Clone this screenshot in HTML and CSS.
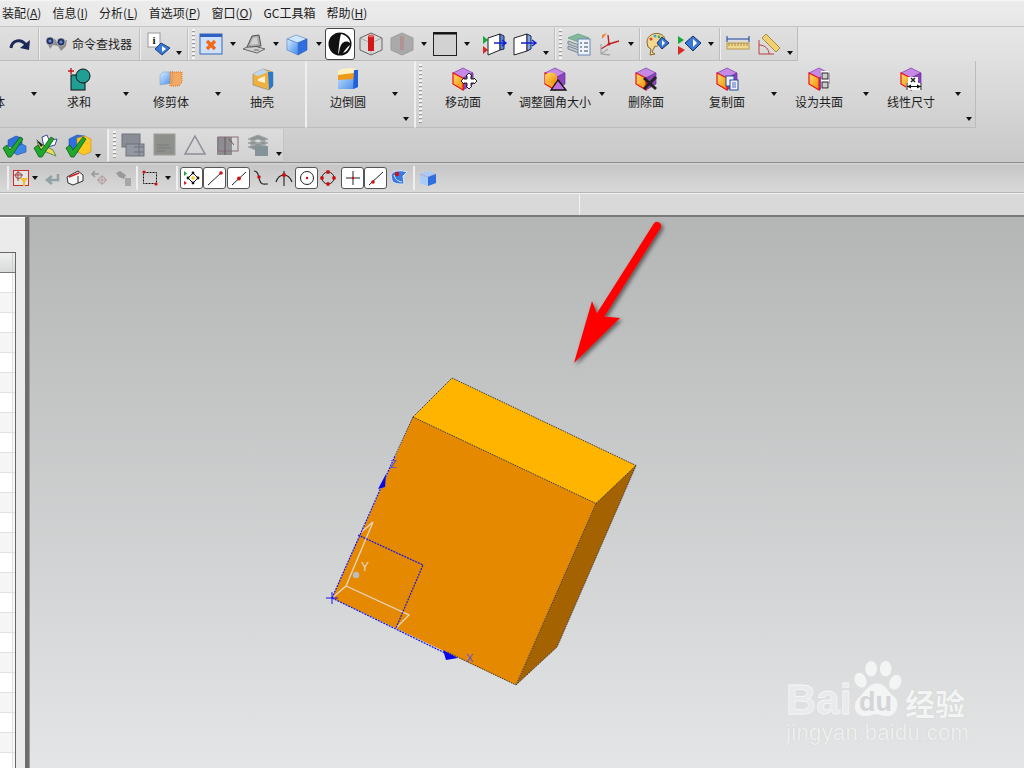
FILE: index.html
```html
<!DOCTYPE html>
<html lang="zh-CN">
<head>
<meta charset="utf-8">
<title>NX</title>
<link rel="stylesheet" href="styles.css">
</head>
<body>
<svg class="defs" aria-hidden="true">
  <defs>
    <linearGradient id="bl" x1="0" y1="0" x2="1" y2="1"><stop offset="0" stop-color="#d8ecff"/><stop offset="1" stop-color="#3d86ea"/></linearGradient>
    <linearGradient id="yl" x1="0" y1="0" x2="1" y2="1"><stop offset="0" stop-color="#ffe070"/><stop offset="1" stop-color="#f08a00"/></linearGradient>
    <symbol id="face" viewBox="0 0 24 24">
      <path d="M12 1 22 6 12 11 2 6Z" fill="#c48ae6" stroke="#7a3aa8" stroke-width=".7"/>
      <path d="M22 6V17L12 23V11Z" fill="#8c45bd" stroke="#6a2c98" stroke-width=".7"/>
      <path d="M2 6 12 11V23L2 17Z" fill="url(#yl)" stroke="#f01010" stroke-width="1.2"/>
    </symbol>
    <symbol id="cube" viewBox="0 0 24 24">
      <path d="M2 7 11 3 22 7 12 11Z" fill="#cfe6ff" stroke="#4a7fc0" stroke-width=".6"/>
      <path d="M22 7V18L13 23V11Z" fill="#2f6fe0" stroke="#2a58b0" stroke-width=".6"/>
      <path d="M2 7 13 11V23L2 18Z" fill="url(#bl)" stroke="#4a7fc0" stroke-width=".6"/>
    </symbol>
    <symbol id="check" viewBox="0 0 24 24">
      <path d="M1 14 5 11 8 16 18 3 21 5 9 23H6Z" fill="#1fa82c" stroke="#0b5c16" stroke-width=".8"/>
    </symbol>
  </defs>
</svg>

<div class="top">
  <nav class="menubar">
    <span class="mi">装配(<u>A</u>)</span>
    <span class="mi">信息(<u>I</u>)</span>
    <span class="mi">分析(<u>L</u>)</span>
    <span class="mi">首选项(<u>P</u>)</span>
    <span class="mi">窗口(<u>O</u>)</span>
    <span class="mi">GC工具箱</span>
    <span class="mi">帮助(<u>H</u>)</span>
  </nav>

  <div class="row1">
    <div class="bar bar1">
      <svg class="ic ml7" viewBox="0 0 24 24"><path d="M4 16C5 8 14 6 19 13" fill="none" stroke="#1a2858" stroke-width="3"/><path d="M23 8 22 18 13 16Z" fill="#1a2858"/></svg>
      <i class="sep ml7"></i>
      <svg class="ic ml5" viewBox="0 0 24 24"><path d="M2 8 11 7 13 10 23 8 22 14 17 19 14 14 9 13 6 17Z" fill="#8d8d8d"/><circle cx="6" cy="9" r="4" fill="#24345e" stroke="#ddd" stroke-width=".6"/><circle cx="17" cy="10" r="4" fill="#24345e" stroke="#ddd" stroke-width=".6"/><circle cx="6" cy="9" r="1.6" fill="#6b8fd8"/><circle cx="17" cy="10" r="1.6" fill="#6b8fd8"/></svg>
      <span class="finder ml4">命令查找器</span>
      <i class="sep ml7"></i>
      <svg class="ic ml7" viewBox="0 0 24 24"><rect x="1" y="1" width="12" height="14" fill="#fff" stroke="#999"/><text class="ico-i" x="7" y="12">i</text><path d="M14 11 23 16 15 23 8 17Z" fill="#3a78d8" stroke="#1c3d80"/><path d="M15 14 19 17 15 20Z" fill="#fff"/></svg>
      <i class="dd low ml3"></i>
      <i class="sep ml3"></i>
      <i class="grip ml4"></i>
      <svg class="ic ml4" viewBox="0 0 24 24"><rect x="1" y="2" width="22" height="20" fill="#cfe0fb" stroke="#3768b8"/><rect x="1" y="2" width="22" height="3" fill="#2f62c0"/><path d="M8 9 16 17M16 9 8 17" stroke="#f06a18" stroke-width="3.400"/></svg>
      <i class="dd ml5"></i>
      <svg class="ic ml4" viewBox="0 0 24 24"><path d="M1 17 9 13 23 17 15 21Z" fill="#d0d0d0" stroke="#666"/><path d="M5 15 10 4 17 3 19 14 9 15Z" fill="#a8a8a8" stroke="#555"/><path d="M8 13 11 6 15 5 16 12Z" fill="#d0d0d0"/><path d="M12 18h5" stroke="#666"/></svg>
      <i class="dd ml5"></i>
      <svg class="ic ml4"><use href="#cube"/></svg>
      <i class="dd ml5"></i>
      <span class="tog ml1"><svg class="ic" viewBox="0 0 24 24"><circle cx="12" cy="12" r="11.500" fill="#111"/><path d="M13 2C18 3 22 7 22 11 18 8 15 10 13 13 11 17 12 20 10 22 11 17 11 8 13 2Z" fill="#fff"/><path d="M2 13C6 10 9 11 10 13 7 14 5 17 5 19 3 17 2 15 2 13Z" fill="#111"/><path d="M22 13C21 17 18 20 15 21 17 18 19 15 22 13Z" fill="#fff"/></svg></span>
      <svg class="ic ml4" viewBox="0 0 24 24"><path d="M12 1 23 6V18L12 23 1 18V6Z" fill="#d8d8d8" stroke="#666"/><path d="M1 6 12 11 23 6M12 11V23" stroke="#888" fill="none" stroke-width=".6"/><rect x="9" y="4" width="6" height="15" fill="#d01818"/><ellipse cx="12" cy="4" rx="3" ry="1.4" fill="#f06060"/></svg>
      <svg class="ic ml7 dim" viewBox="0 0 24 24"><path d="M12 1 23 6V18L12 23 1 18V6Z" fill="#9a9a9a" stroke="#888"/><rect x="10" y="4" width="4" height="14" fill="#a27c7c"/></svg>
      <i class="dd ml5"></i>
      <svg class="ic ml4 square" viewBox="0 0 24 24"><rect x=".5" y=".5" width="23" height="23" fill="#d2d2d2" stroke="#222"/><rect x=".5" y=".5" width="23" height="2" fill="#111"/></svg>
      <i class="dd ml5"></i>
      <svg class="ic ml10" viewBox="0 0 24 24"><path d="M1 4 6 8 1 12Z" fill="#17a83a"/><path d="M1 14 6 18 1 22Z" fill="#d82828"/><path d="M6 6 18 2V18L6 23Z" fill="#fff" stroke="#222"/><path d="M18 2 22 4V17L18 18Z" fill="#5a8ae0" stroke="#224"/><path d="M12 11H24M20 8 24 11 20 14" stroke="#1420d0" fill="none" stroke-width="1.4"/></svg>
      <svg class="ic ml7" viewBox="0 0 24 24"><path d="M1 6 14 2V19L1 23Z" fill="#fff" stroke="#222"/><path d="M14 2 18 4V17L14 19Z" fill="#7aa6ea" stroke="#224"/><path d="M8 11H23M19 8 23 11 19 14" stroke="#1420d0" fill="none" stroke-width="1.4"/></svg>
      <i class="dd low ml4"></i>
      <i class="sep ml3"></i>
      <i class="grip ml4"></i>
      <svg class="ic ml5" viewBox="0 0 24 24"><path d="M1 6 11 2 22 6 12 10Z" fill="#86b89a" stroke="#6a8"/><path d="M1 9 12 13 22 9V12L12 16 1 12ZM1 14 12 18 22 14V17L12 21 1 17Z" fill="#c0c8c4" stroke="#789"/><rect x="11" y="7" width="12" height="16" fill="#eef3fb" stroke="#6a86b8"/><path d="M13 11h2m2 0h4M13 15h2m2 0h4M13 19h2m2 0h4" stroke="#345" stroke-width="1"/></svg>
      <svg class="ic ml7" viewBox="0 0 24 24"><path d="M11 12 3 17M11 12 10 3M11 12 21 9" stroke="#c02020" stroke-width="1.4"/><path d="M4 3 9 1 4 7Z" fill="#f08030"/><path d="M3 12V22L12 23M3 22 10 17" stroke="#a8a8a8" fill="none" stroke-width="1.3"/><circle cx="11" cy="12" r="1.5" fill="#c02020"/></svg>
      <i class="dd ml4"></i>
      <i class="sep ml3"></i>
      <svg class="ic ml5" viewBox="0 0 24 24"><path d="M2 10C2 3 10 0 15 2 21 4 21 9 16 10 12 11 14 16 10 14L7 20 10 22 5 23 6 17 3 15Z" fill="#f2d890" stroke="#8a6a2a"/><circle cx="6" cy="7" r="1.5" fill="#e04040"/><circle cx="10" cy="4" r="1.5" fill="#40a0e0"/><circle cx="14" cy="5" r="1.4" fill="#40b060"/><path d="M17 5 24 11 17 17 12 11Z" fill="#3a78d8" stroke="#14306a"/><path d="M17 8 20 11 17 14Z" fill="#fff"/></svg>
      <svg class="ic ml8" viewBox="0 0 24 24"><path d="M1 4 7 8 1 12Z" fill="#17a83a"/><path d="M1 14 8 18 1 23Z" fill="#d82828"/><path d="M16 4 24 11 16 19 8 11Z" fill="#3a78d8" stroke="#14306a"/><path d="M16 7 20 11 16 15Z" fill="#fff"/></svg>
      <i class="dd ml5"></i>
      <i class="sep ml3"></i>
      <svg class="ic ml6" viewBox="0 0 24 24"><rect x="1" y="11" width="22" height="6" fill="#f0d890" stroke="#b89a50"/><path d="M3 11v3m3-3v3m3-3v3m3-3v3m3-3v3m3-3v3m3-3v3" stroke="#8a6a2a" stroke-width=".7"/><path d="M1 7H23M1 4V10M23 4V10" stroke="#1440a0" stroke-width="1"/></svg>
      <svg class="ic ml7" viewBox="0 0 24 24"><path d="M9 2 23 16 19 20 5 6Z" fill="#f0d070" stroke="#a88a40"/><path d="M2 8V22H17" stroke="#b84040" fill="none" stroke-width="1"/><path d="M2 13C8 13 12 17 12 22" stroke="#b84040" fill="none" stroke-width="1"/></svg>
      <i class="dd low ml4"></i>
    </div>
  </div>

  <div class="ribbon">
    <div class="rgroup g1">
      <div class="tool first"><svg class="ic" viewBox="0 0 24 24"></svg><span class="lab">拉伸体</span></div><i class="dd rdd"></i>
      <div class="tool"><svg class="ic" viewBox="0 0 24 24"><path d="M1 4H7M4 1V7" stroke="#c01818" stroke-width="1.4"/><rect x="4" y="8" width="14" height="15" fill="#20a095" stroke="#111"/><circle cx="16" cy="9" r="7" fill="#20a095" stroke="#111"/></svg><span class="lab">求和</span></div><i class="dd rdd"></i>
      <div class="tool"><svg class="ic" viewBox="0 0 24 24"><path d="M1 8 4 5H14V16L1 18Z" fill="url(#bl)" stroke="#7a9ac0" stroke-width=".5"/><path d="M11 5H23V15L20 19H11Z" fill="#f4a050" fill-opacity=".85" stroke="#e07018" stroke-dasharray="1 1"/></svg><span class="lab">修剪体</span></div><i class="dd rdd"></i>
      <div class="tool shell"><svg class="ic" viewBox="0 0 24 24"><path d="M3 7 13 2 23 5V19L19 23 3 18Z" fill="#f0b040" stroke="#777" stroke-width=".5"/><path d="M18 5 23 5V19L19 23Z" fill="#2878d0"/><path d="M3 7 13 2 18 5 8 9Z" fill="#bcd8f0"/><path d="M8 12 15 9V16L8 14Z" fill="#fff4d8"/></svg><span class="lab">抽壳</span></div>
    </div>
    <div class="rgroup g2">
      <div class="tool"><svg class="ic" viewBox="0 0 24 24"><path d="M2 6 18 2 22 3V20L17 22H2Z" fill="url(#bl)"/><path d="M2 4C2 2 16 0 20 2V7L2 10Z" fill="#fff2c0"/><path d="M2 8 18 6V12L2 13Z" fill="#f09818"/><path d="M18 3 22 3V20L17 22Z" fill="#2060d8"/></svg><span class="lab">边倒圆</span></div><i class="dd rdd"></i>
      <i class="dd corner"></i>
    </div>
    <div class="rgroup g3">
      <i class="grip tall"></i>
      <div class="tool"><svg class="ic" viewBox="0 0 24 24"><use href="#face"/><path d="M16 9V12H13L13 11 10 14 13 17V16H16V19L15 19 18 22 21 19H20V16H23V17L26 14 23 11V12H20V9H21L18 6 15 9Z" fill="#fff" stroke="#111" stroke-width=".9"/></svg><span class="lab">移动面</span></div><i class="dd rdd"></i>
      <div class="tool"><svg class="ic" viewBox="0 0 24 24"><use href="#face"/><path d="M2 8C6 4 12 5 14 9V16H2Z" fill="url(#yl)"/><path d="M15 13 23 23H8Z" fill="#c070e0" stroke="#111" stroke-width="1.3"/></svg><span class="lab wide">调整圆角大小</span></div><i class="dd rdd"></i>
      <div class="tool del"><svg class="ic" viewBox="0 0 24 24"><use href="#face"/><path d="M10 11 22 22M22 10 10 22" stroke="#222" stroke-width="3"/></svg><span class="lab">删除面</span></div>
      <div class="tool copy"><svg class="ic" viewBox="0 0 24 24"><use href="#face"/><rect x="11" y="9" width="8" height="10" fill="#f0f0ff" stroke="#224aa0"/><rect x="15" y="13" width="8" height="10" fill="#f0f0ff" stroke="#224aa0"/><path d="M17 16h4M17 18h4M17 20h4" stroke="#224aa0" stroke-width=".8"/></svg><span class="lab">复制面</span></div><i class="dd rdd"></i>
      <div class="tool"><svg class="ic" viewBox="0 0 24 24"><use href="#face"/><rect x="14" y="4" width="8" height="18" fill="#fff"/><rect x="15" y="6" width="6" height="6" fill="#ccc" stroke="#222"/><rect x="15" y="15" width="6" height="6" fill="#ccc" stroke="#222"/></svg><span class="lab">设为共面</span></div><i class="dd rdd"></i>
      <div class="tool"><svg class="ic" viewBox="0 0 24 24"><use href="#face"/><rect x="9" y="10" width="10" height="6" fill="#fff"/><path d="M12 11 16 15M16 11 12 15" stroke="#222" stroke-width="1.5"/><rect x="7" y="16" width="16" height="7" fill="#fff"/><path d="M8 16V23M22 16V23M8 19.500H22" stroke="#111" stroke-width="1"/><path d="M8 19.500 12 17.500V21.500ZM22 19.500 18 17.500V21.500Z" fill="#111"/></svg><span class="lab">线性尺寸</span></div><i class="dd rdd"></i>
      <i class="dd corner"></i>
    </div>
  </div>

  <div class="row3">
    <div class="bar3 a">
      <svg class="ic ml2" viewBox="0 0 24 24"><path d="M6 6 14 2 20 4V11L11 14 6 12Z" fill="#2f6fe0" stroke="#14409a" stroke-width=".5"/><path d="M12 13 20 10 24 12V18L15 21 12 19Z" fill="#3c86ea" stroke="#14409a" stroke-width=".5"/><use href="#check"/></svg>
      <svg class="ic ml7" viewBox="0 0 24 24"><path d="M9 3 14 1 16 6 24 5 22 11 11 14Z" fill="#fff" stroke="#3a4aa0"/><path d="M4 8 20 16 23 22 8 16Z" fill="#f0d858" stroke="#3a8050" stroke-width=".8"/><path d="M3 5 10 11 8 13Z" fill="#222"/><use href="#check"/></svg>
      <svg class="ic ml8" viewBox="0 0 24 24"><path d="M4 5 12 1 20 2V15L8 20 4 16Z" fill="#2f6fe0" stroke="#14409a" stroke-width=".5"/><path d="M12 4 20 2 26 5V18L18 21 12 17Z" fill="#ffc820" stroke="#c08010" stroke-width=".5"/><use href="#check"/></svg>
      <i class="dd low ml4"></i>
    </div>
    <div class="bar3 b">
      <i class="grip short"></i>
      <svg class="ic ml4 off" viewBox="0 0 24 24"><rect x="2" y="1" width="18" height="13" fill="#858a92" stroke="#6a6e76"/><rect x="6" y="11" width="18" height="12" fill="#9095a0" stroke="#6a6e76"/><path d="M14 14H24M14 19H24M19 11V23" stroke="#6a6e76"/></svg>
      <svg class="ic ml8 off" viewBox="0 0 24 24"><rect x="2" y="1" width="21" height="21" fill="#8a8d88" stroke="#9a9c98"/><path d="M5 12H17M5 15H19M5 18H13" stroke="#777"/></svg>
      <svg class="ic ml7 off" viewBox="0 0 24 24"><path d="M12 3 22 21H2Z" fill="none" stroke="#8a8794" stroke-width="1.5"/></svg>
      <svg class="ic ml8 off" viewBox="0 0 24 24"><path d="M2 4H17V22H2Z" fill="#888b90"/><rect x="3" y="4" width="20" height="14" fill="none" stroke="#8a6a70"/><path d="M10 4V22M14 6 19 12" stroke="#6a5050"/></svg>
      <svg class="ic ml7 off" viewBox="0 0 24 24"><path d="M2 6 12 2 22 6 12 10ZM2 10 12 14 22 10 12 6ZM2 14 12 18 22 14 12 10Z" fill="#8a9090" stroke="#a0a6a6"/><rect x="9" y="13" width="13" height="10" fill="#7f9094"/></svg>
      <i class="dd low ml4"></i>
    </div>
  </div>

  <div class="row4">
    <i class="sep4 ml7"></i>
    <svg class="ic16 ml5" viewBox="0 0 16 16"><rect x=".5" y=".5" width="15" height="15" fill="#e4e4e4" stroke="#c83030"/><path d="M5 1V11M1 5H10" stroke="#a04040"/><circle cx="5.500" cy="5.500" r="3" fill="none" stroke="#a04040"/><path d="M7 8H15L12 12V16H10V12Z" fill="#f0c030"/></svg>
    <i class="dd mid ml1"></i>
    <svg class="ic16 ml4 off2" viewBox="0 0 16 16"><path d="M14 4V10H5M8 6 3 10 8 14" fill="none" stroke="#7a9098" stroke-width="2.500"/></svg>
    <svg class="ic18 ml6" viewBox="0 0 18 16"><path d="M1 7 12 1 17 5V11L7 15 2 13Z" fill="#f4f4f4" stroke="#333"/><path d="M3 7 13 3" stroke="#d02020" stroke-width="1.600"/><path d="M12 6V13" stroke="#333"/></svg>
    <svg class="ic18 ml6 off2" viewBox="0 0 18 16"><path d="M9 4H3M5 1 2 4 5 7" fill="none" stroke="#888" stroke-width="1.600"/><circle cx="12" cy="10" r="3.500" fill="none" stroke="#a88"/><path d="M12 5V15M7 10H17" stroke="#a88"/></svg>
    <svg class="ic18 ml6 off2" viewBox="0 0 18 16"><path d="M2 3 6 1 12 5 10 9 5 7Z" fill="#888"/><rect x="11" y="8" width="6" height="8" fill="#999"/></svg>
    <i class="sep4 ml4"></i>
    <svg class="ic16 ml5" viewBox="0 0 16 16"><rect x="1.500" y="2.500" width="13" height="11" fill="none" stroke="#111" stroke-dasharray="2 1"/><circle cx="2" cy="2" r="1.600" fill="#d01010"/><circle cx="14" cy="14" r="1.600" fill="#d01010"/></svg>
    <i class="dd mid ml5"></i>
    <i class="sep4 ml3"></i>
    <span class="snap ml3"><svg class="ic18" viewBox="0 0 18 16"><path d="M1 1 4 3.500 1 6Z" fill="#18a838"/><path d="M1 11 4 13 1 15Z" fill="#d02020"/><path d="M10 3 15 8 10 13 5 8Z" fill="none" stroke="#111"/><circle cx="10" cy="8" r="1.800" fill="#f0d020"/><circle cx="10" cy="3" r="1.400" fill="#111"/><circle cx="10" cy="13" r="1.400" fill="#111"/><circle cx="5" cy="8" r="1.400" fill="#111"/><circle cx="15" cy="8" r="1.400" fill="#111"/></svg></span>
    <span class="snap"><svg class="ic18" viewBox="0 0 18 16"><path d="M2 15 16 2" stroke="#222"/><circle cx="15" cy="3" r="1.800" fill="#d01010"/></svg></span>
    <span class="snap ml1"><svg class="ic18" viewBox="0 0 18 16"><path d="M2 15 16 2" stroke="#222"/><circle cx="9" cy="8.500" r="2" fill="#d01010"/></svg></span>
    <svg class="ic18 ml2" viewBox="0 0 18 16"><path d="M2 1C7 1 6 7 8 11 9 15 12 14 16 14" fill="none" stroke="#222" stroke-width="1.100"/><circle cx="7" cy="7" r="1.800" fill="#d01010"/></svg>
    <svg class="ic18 ml5" viewBox="0 0 18 16"><path d="M1 12C3 6 6 5 9 5 12 5 15 7 17 12M9 1V16" fill="none" stroke="#222" stroke-width="1.100"/><circle cx="9" cy="5" r="2" fill="#d01010"/></svg>
    <span class="snap ml2"><svg class="ic18" viewBox="0 0 18 16"><circle cx="9" cy="8" r="6.500" fill="none" stroke="#222"/><circle cx="9" cy="8" r="1.200" fill="#d01010"/></svg></span>
    <svg class="ic18 ml1" viewBox="0 0 18 16"><circle cx="9" cy="8" r="6" fill="none" stroke="#222"/><circle cx="9" cy="2" r="1.900" fill="#d01010"/><circle cx="9" cy="14" r="1.900" fill="#d01010"/><circle cx="3" cy="8" r="1.900" fill="#d01010"/><circle cx="15" cy="8" r="1.900" fill="#d01010"/></svg>
    <span class="snap ml4"><svg class="ic18" viewBox="0 0 18 16"><path d="M2 8H16M9 1V15" stroke="#222"/><circle cx="9" cy="8" r="1.200" fill="#d01010"/></svg></span>
    <span class="snap"><svg class="ic18" viewBox="0 0 18 16"><path d="M2 15 16 2" stroke="#222"/><circle cx="6" cy="12" r="1.800" fill="#d01010"/></svg></span>
    <svg class="ic18 ml3" viewBox="0 0 18 16"><path d="M1 5C3 0 12 0 17 2L13 6 14 14C9 14 3 14 2 10Z" fill="#3a7ae0" stroke="#d8e8ff"/><circle cx="7" cy="4" r="2.200" fill="#d01010"/><path d="M4 5C5 9 7 11 12 12" stroke="#dce8fa" fill="none"/></svg>
    <i class="sep4 ml5"></i>
    <svg class="ic18 ml5" viewBox="0 0 18 16"><path d="M1 4 9 1 17 4V13L9 16 1 13Z" fill="#a8ccf6"/><path d="M1 4 9 7 17 4" stroke="#e08090" fill="none" stroke-dasharray="1 1"/><path d="M9 7V16L17 13V4Z" fill="#2f6fe0"/></svg>
  </div>

  <div class="row5"><div class="cue"></div><div class="status"></div></div>
</div>

<main class="main">
  <aside class="panel">
    <div class="table">
      <div class="thead"></div>
      <div class="tr"></div><div class="tr alt"></div><div class="tr"></div><div class="tr alt"></div><div class="tr"></div>
      <div class="tr alt"></div><div class="tr"></div><div class="tr alt"></div><div class="tr"></div><div class="tr alt"></div>
      <div class="tr"></div><div class="tr alt"></div><div class="tr"></div><div class="tr alt"></div><div class="tr"></div>
      <div class="tr alt"></div><div class="tr"></div><div class="tr alt"></div><div class="tr"></div><div class="tr alt"></div>
      <div class="tr"></div><div class="tr alt"></div><div class="tr"></div><div class="tr alt"></div><div class="tr"></div>
    </div>
  </aside>
  <section class="view">
    <svg class="scene" viewBox="29 217 995 551" preserveAspectRatio="none">
      <defs>
        <filter id="sh" x="-30%" y="-30%" width="160%" height="160%"><feDropShadow dx="2" dy="2" stdDeviation="2" flood-color="#000" flood-opacity=".55"/></filter>
      </defs>
      <path class="f-top" d="M452 378 636 465.500 596 503.500 413 417Z"/>
      <path class="f-right" d="M596 503.500 636 465.500 557 647 516 685Z"/>
      <path class="f-front" d="M413 417 596 503.500 516 685 332 598Z"/>
      <path class="edge" d="M413 417 452 378 636 465.500 596 503.500 413 417M596 503.500 516 685 447 652M516 685 557 647 636 465.500M413 417 395 456"/>
      <path class="wcs" d="M332 598 346 586 373 522 358 535M346 586 409 615 396 628"/>
      <circle class="ball" cx="356" cy="575" r="3.200"/>
      <text class="wlabel" x="361" y="571">Y</text>
      <path class="csys" d="M332 598 395 456M332 598 447 654M358 535 423 565 396 628"/>
      <path class="cross" d="M326 598H338M332 592V604"/>
      <path class="head" d="M386 474 378 489 385 487ZM443 650 458 658 446 660Z"/>
      <text class="blabel" x="390" y="468">Z</text>
      <text class="blabel" x="466" y="662">X</text>
      <g filter="url(#sh)">
        <path class="shaft" d="M657 226 600 316"/>
        <path class="arrowhead" d="M574 363 592 301 598 316 620 318Z"/>
      </g>
    </svg>
    <div class="wm">
      <div class="wm-line">
        <span class="bai">Bai</span>
        <span class="paw">
          <svg class="pawsvg" viewBox="0 0 56 60"><ellipse cx="12" cy="21" rx="6" ry="8" transform="rotate(-25 12 21)"/><ellipse cx="23" cy="9" rx="6" ry="8"/><ellipse cx="38" cy="9" rx="6" ry="8"/><ellipse cx="48" cy="23" rx="6" ry="8" transform="rotate(25 48 23)"/><path d="M29 24C38 24 40 33 47 38 53 44 50 58 40 58 35 58 32 56 29 56 25 56 22 58 16 58 6 58 3 46 10 39 17 33 20 24 29 24Z"/></svg>
          <span class="du">du</span>
        </span>
        <span class="jy">经验</span>
      </div>
      <div class="url">jingyan.baidu.com</div>
    </div>
  </section>
</main>
</body>
</html>
```

FILE: styles.css
```css
* { box-sizing: border-box; }
html, body { margin: 0; padding: 0; width: 1024px; height: 768px; overflow: hidden; }
body { font-family: "Noto Sans CJK SC", "Liberation Sans", sans-serif; font-size: 12px; color: #222; background: #d8d8d8; }
.defs { display: block; width: 0; height: 0; overflow: hidden; }
i { display: block; flex: none; }
svg { flex: none; display: block; }

.ml1 { margin-left: 1px; } .ml2 { margin-left: 2px; } .ml3 { margin-left: 3px; } .ml4 { margin-left: 4px; }
.ml5 { margin-left: 5px; } .ml6 { margin-left: 6px; } .ml7 { margin-left: 7px; } .ml8 { margin-left: 8px; }
.ml10 { margin-left: 10px; }

.top { height: 217px; background: linear-gradient(#ececec, #e0e0e0 60px, #c8c8c8 163px); }

.menubar { height: 26px; display: flex; align-items: center; padding: 0 0 2px 2px; border-top: 1px solid #f4f4f4; }
.mi { margin-right: 11px; line-height: 22px; white-space: nowrap; color: #1c1c1c; }
.mi u { text-underline-offset: 1px; }

.row1 { height: 35px; border-top: 1px solid #c4c4c4; }
.bar { height: 34px; display: flex; align-items: center; }
.bar1 { width: 798px; border-right: 1px solid #bdbdbd; border-bottom: 1px solid #bdbdbd; background: linear-gradient(#e0e0e0, #d6d6d6); }

.ic { width: 24px; height: 24px; overflow: visible; }
.ic16 { width: 16px; height: 16px; overflow: visible; }
.ic18 { width: 18px; height: 16px; overflow: visible; }
.sep { height: 32px; background: #f0f0f0; border-left: 1px solid #bdbdbd; width: 2px; margin-right: -1px; }
.sep4 { width: 2px; height: 24px; background: #eee; margin-right: -1px; }
.grip { width: 3px; height: 30px; background: repeating-linear-gradient(#f4f4f4 0 2px, #9a9a9a 2px 3px, transparent 3px 4px); }
.grip.tall { height: 60px; margin-left: 3px; margin-right: 1px; align-self: center; }
.grip.short { height: 28px; margin-left: 4px; }
.dd { width: 10px; height: 4px; position: relative; }
.dd::after { content: ""; position: absolute; left: 2px; top: 0; border-left: 3px solid transparent; border-right: 3px solid transparent; border-top: 4px solid #111; }
.dd.low { align-self: flex-end; margin-bottom: 5px; }
.dd.mid { align-self: center; }
.finder { width: 60px; white-space: nowrap; line-height: 16px; }
.tog { width: 30px; height: 32px; background: #fff; border: 1px solid #444; border-radius: 3px; display: flex; align-items: center; justify-content: center; }
.dim { opacity: .75; }
.ico-i { font: 700 11px "Liberation Serif", serif; text-anchor: middle; fill: #111; }

.ribbon { height: 68px; display: flex; width: 977px; }
.rgroup { display: flex; height: 67px; background: linear-gradient(#dfdfdf, #cfcfcf); border-bottom: 1px solid #bcbcbc; position: relative; }
.g1 { width: 307px; border-right: 2px solid #efefef; }
.g2 { width: 109px; border-right: 2px solid #efefef; }
.g3 { width: 560px; border-right: 1px solid #bcbcbc; }
.tool { width: 80px; flex: none; display: flex; flex-direction: column; align-items: center; padding-top: 6px; }
.tool.first { margin-left: -53px; }
.tool.shell { width: 78px; }
.tool.del { margin-left: -1px; }
.tool.copy { margin-left: 1px; }
.lab { margin-top: 2px; line-height: 18px; white-space: nowrap; color: #1c1c1c; }
.dd.rdd { width: 12px; margin-top: 31px; }
.dd.rdd::after { left: 4px; }
.dd.corner { width: 12px; align-self: flex-end; margin-left: auto; margin-bottom: 6px; }
.dd.corner::after { left: 3px; }
.g2 .dd.corner { margin-right: 2px; }
.g3 .dd.corner { margin-right: 1px; }
.g2 .tool { margin-left: 1px; }

.row3 { height: 34px; display: flex; border-bottom: 1px solid #8e8e8e; }
.bar3 { height: 34px; display: flex; align-items: center; }
.bar3.a { width: 107px; }
.bar3.b { width: 177px; border-left: 2px solid #eee; border-right: 1px solid #c4c4c4; border-bottom: 1px solid #c4c4c4; background: linear-gradient(#dcdcdc, #d2d2d2); height: 33px; }
.off { opacity: .95; }
.off2 { opacity: .75; }

.row4 { height: 30px; display: flex; align-items: center; padding-bottom: 3px; background: linear-gradient(#c6c6c6, #dadada); border-top: 2px solid #d0d0d0; }
.snap { width: 23px; height: 22px; background: #fff; border: 1px solid #555; border-radius: 3px; display: flex; align-items: center; justify-content: center; flex: none; }

.row5 { height: 24px; display: flex; background: #d9d9d9; border-top: 1px solid #f2f2f2; box-shadow: 0 -1px 0 #b5b5b5; border-bottom: 2px solid #7a7a7a; }
.cue { width: 580px; border-right: 1px solid #f2f2f2; }
.status { flex: 1; }

.main { display: flex; height: 551px; }
.panel { width: 25px; background: #ebebeb; padding-top: 34px; border-top: 1px solid #fff; flex: none; overflow: hidden; }
.table { width: 16px; height: 517px; border: 1px solid #666; border-width: 1px 1px 0 0; overflow: hidden; }
.thead { height: 20px; border-bottom: 1px solid #777; background: linear-gradient(90deg, transparent 12px, #cfcfcf 12px 13px, transparent 13px), linear-gradient(#eef0ef, #d8dada); }
.tr { height: 20px; background: linear-gradient(90deg, #fff 12px, #e2e2e2 12px 13px, #f8f8f8 13px); border-bottom: 1px solid #e2e2e2; }
.tr.alt { background: linear-gradient(90deg, #f5f5f5 12px, #e2e2e2 12px 13px, #f8f8f8 13px); }

.view { flex: 1; position: relative; border-left: 4px solid #6e6e6e; background: linear-gradient(#b4b5b5, #e4e5e6); overflow: hidden; box-shadow: inset 1px 0 0 #9a9a9a; }
.scene { position: absolute; left: 0; top: 0; width: 995px; height: 551px; }
.f-top { fill: #ffb400; }
.f-right { fill: #a56200; }
.f-front { fill: #e58a00; }
.edge { fill: none; stroke: #3a3a44; stroke-width: 1; stroke-dasharray: 1.500 1; }
.wcs { fill: none; stroke: #e6d8c4; stroke-width: 1.300; }
.ball { fill: #bdbdbd; }
.wlabel { font: 12px "Liberation Sans", sans-serif; fill: #dcdcd8; }
.csys { fill: none; stroke: #1414f0; stroke-width: 1.200; stroke-dasharray: 2 1; }
.cross { stroke: #1414f0; stroke-width: 1; }
.head { fill: #0808e8; }
.blabel { font: 11px "Liberation Sans", sans-serif; fill: #5a50e0; }
.shaft { stroke: #ff0000; stroke-width: 8; stroke-linecap: round; }
.arrowhead { fill: #ff0000; }

.wm { position: absolute; left: 757px; top: 443px; width: 240px; color: #f3f4f4; }
.wm-line { display: flex; align-items: flex-end; height: 58px; }
.bai { font: 700 42px/34px "Liberation Sans", sans-serif; width: 64px; margin-bottom: 1px; white-space: nowrap; color: #e9eaeb; -webkit-text-stroke: .8px #f5f6f6; }
.paw { width: 56px; height: 58px; position: relative; flex: none; margin-left: -2px; }
.pawsvg { width: 56px; height: 58px; fill: #f3f4f4; }
.du { position: absolute; left: 11px; top: 29px; font: 700 27px/27px "Liberation Sans", sans-serif; color: #d4d6d7; }
.jy { font-size: 30px; line-height: 32px; font-weight: 700; margin-left: 1px; white-space: nowrap; text-shadow: 0 0 1px #bbb; }
.url { margin-top: 3px; font: 22px/24px "Liberation Sans", sans-serif; letter-spacing: .35px; color: #eef0f0; white-space: nowrap; text-shadow: 0 0 1px #c4c4c4; }
```
